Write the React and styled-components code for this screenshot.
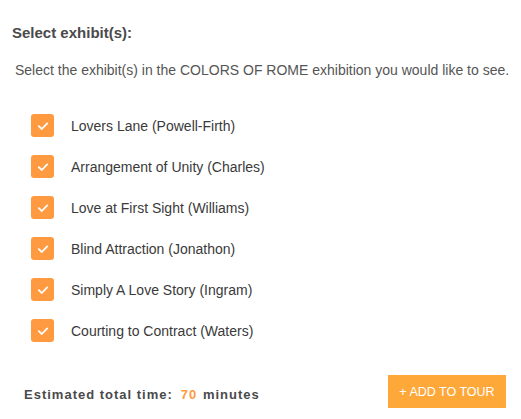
import React, { useState } from "react";
import styled, { createGlobalStyle } from "styled-components";

const exhibits = [
  "Lovers Lane (Powell-Firth)",
  "Arrangement of Unity (Charles)",
  "Love at First Sight (Williams)",
  "Blind Attraction (Jonathon)",
  "Simply A Love Story (Ingram)",
  "Courting to Contract (Waters)",
];

const Global = createGlobalStyle`
  body {
    margin: 0;
    background: #fff;
    font-family: "Liberation Sans", Arial, sans-serif;
  }
`;

const Page = styled.div`
  width: 521px;
  height: 419px;
  padding: 24px 0 0 12px;
  box-sizing: border-box;
`;

const Heading = styled.h2`
  margin: 0;
  font-size: 15px;
  font-weight: bold;
  color: #4a4a4a;
  line-height: 18px;
`;

const Intro = styled.p`
  margin: 20px 0 0 3px;
  font-size: 14px;
  color: #555;
  line-height: 16px;
  white-space: nowrap;
`;

const List = styled.ul`
  list-style: none;
  margin: 36px 0 0 19px;
  padding: 0;
  display: flex;
  flex-direction: column;
  gap: 18px;
`;

const Row = styled.li`
  display: flex;
  align-items: center;
  gap: 17px;
  height: 23px;
  cursor: pointer;
`;

const Box = styled.span`
  width: 23px;
  height: 23px;
  border-radius: 3px;
  background: ${(p) => (p.$on ? "#ff9a40" : "#fff")};
  border: ${(p) => (p.$on ? "none" : "1px solid #ccc")};
  display: flex;
  align-items: center;
  justify-content: center;
  box-sizing: border-box;
`;

const Label = styled.span`
  font-size: 14px;
  color: #3a3a3a;
`;

const Footer = styled.div`
  display: flex;
  align-items: center;
  justify-content: space-between;
  margin: 33px 15px 0 12px;
`;

const Total = styled.div`
  font-size: 13px;
  font-weight: bold;
  color: #4a4a4a;
  letter-spacing: 1px;
  padding-top: 6px;
`;

const Minutes = styled.span`
  color: #ff9a40;
  margin: 0 1px 0 8px;
`;

const AddButton = styled.button`
  width: 118px;
  height: 33px;
  border: none;
  background: #ffa83a;
  color: #fff;
  font-family: "Liberation Sans", Arial, sans-serif;
  font-size: 12.5px;
  padding: 0;
  cursor: pointer;
`;

const Check = () => (
  <svg width="12" height="10" viewBox="0 0 12 10">
    <path d="M1.8 5.2 L4.8 8 L10.2 2.4" fill="none" stroke="#fff" strokeWidth="1.8" strokeLinecap="round" strokeLinejoin="round" />
  </svg>
);

export default function App() {
  const [checked, setChecked] = useState(exhibits.map(() => true));
  const toggle = (i) => setChecked((c) => c.map((v, j) => (j === i ? !v : v)));
  return (
    <Page>
      <Global />
      <Heading>Select exhibit(s):</Heading>
      <Intro>Select the exhibit(s) in the COLORS OF ROME exhibition you would like to see.</Intro>
      <List>
        {exhibits.map((name, i) => (
          <Row key={name} onClick={() => toggle(i)}>
            <Box $on={checked[i]}>{checked[i] && <Check />}</Box>
            <Label>{name}</Label>
          </Row>
        ))}
      </List>
      <Footer>
        <Total>
          Estimated total time:<Minutes>70</Minutes> minutes
        </Total>
        <AddButton>+ ADD TO TOUR</AddButton>
      </Footer>
    </Page>
  );
}
